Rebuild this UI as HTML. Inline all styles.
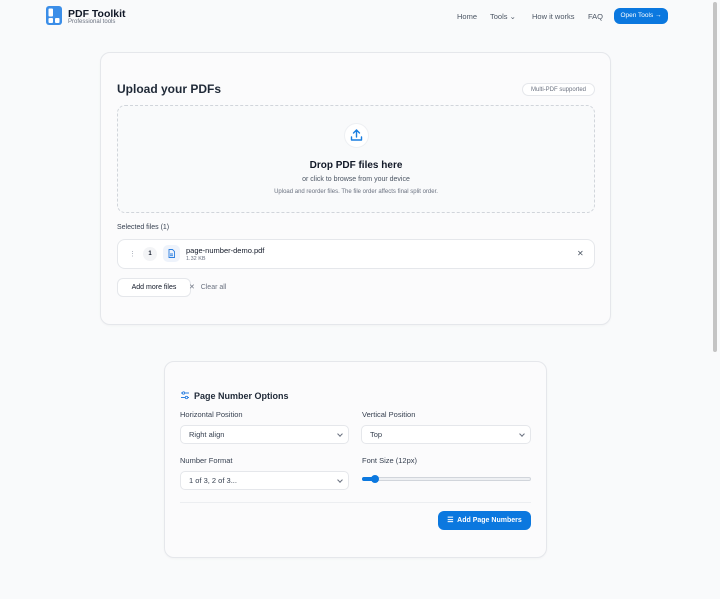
<!DOCTYPE html>
<html><head><meta charset="utf-8"><style>
*{box-sizing:border-box;margin:0;padding:0}
body{width:720px;height:599px;overflow:hidden;background:#f9fafb;font-family:"Liberation Sans",sans-serif;color:#111827;position:relative}
.abs{position:absolute}
.card{position:absolute;background:#fbfbfc;border:1px solid #e5e7eb;border-radius:10px;box-shadow:0 1px 2px rgba(0,0,0,.03)}
.sel{position:absolute;height:19px;border:1px solid #e5e7eb;border-radius:5px;background:#fff;font-size:7.5px;color:#374151;padding-left:8px;line-height:17px}
.sel:after{content:"";position:absolute;right:6px;top:6px;width:3px;height:3px;border-right:1px solid #6b7280;border-bottom:1px solid #6b7280;transform:rotate(45deg)}
.lbl{position:absolute;font-size:7.5px;color:#374151}
</style></head><body>
<svg class="abs" style="left:46px;top:6px" width="16" height="19" viewBox="0 0 16 19"><rect width="16" height="19" rx="3" fill="#3b8ee8"/><rect x="2.5" y="2.5" width="4.5" height="8" rx="1" fill="#fff"/><rect x="2.5" y="12" width="4.5" height="5" rx="1" fill="#fff"/><rect x="9" y="12" width="4.5" height="5" rx="1" fill="#fff"/></svg>
<div class="abs" style="left:68px;top:8px;font-size:10.5px;font-weight:bold">PDF Toolkit</div>
<div class="abs" style="left:68px;top:19px;font-size:6px;color:#6b7280">Professional tools</div>
<div class="abs" style="left:457px;top:12px;font-size:7.5px;color:#4b5563">Home</div>
<div class="abs" style="left:490px;top:12px;font-size:7.5px;color:#4b5563">Tools ⌄</div>
<div class="abs" style="left:532px;top:12px;font-size:7.5px;color:#4b5563">How it works</div>
<div class="abs" style="left:588px;top:12px;font-size:7.5px;color:#4b5563">FAQ</div>
<div class="abs" style="left:614px;top:8px;width:54px;height:16px;background:#0b78df;border-radius:6px;color:#fff;font-size:6.5px;line-height:16px;text-align:center">Open Tools →</div>
<div class="abs" style="left:713px;top:2px;width:4px;height:350px;background:#c4c4c4;border-radius:2px"></div>

<div class="card" style="left:100px;top:52px;width:511px;height:273px"></div>
<div class="abs" style="left:117px;top:82px;font-size:12px;font-weight:bold;color:#1f2937">Upload your PDFs</div>
<div class="abs" style="left:522px;top:83px;width:73px;height:13px;border:1px solid #e5e7eb;border-radius:7px;background:#fff;font-size:6px;color:#6b7280;text-align:center;line-height:12px">Multi-PDF supported</div>
<div class="abs" style="left:117px;top:105px;width:478px;height:108px;border:1px dashed #d1d5db;border-radius:8px;background:#f9fafb"></div>
<div class="abs" style="left:344px;top:123px;width:25px;height:25px;border-radius:50%;background:#fff;border:1px solid #eef0f3"></div>
<svg class="abs" style="left:349px;top:128px" width="15" height="15" viewBox="0 0 15 15" fill="none" stroke="#1a7ee0" stroke-width="1.4" stroke-linecap="round" stroke-linejoin="round"><path d="M7.5 2v7M4.5 5l3-3 3 3M2.5 9v3h10V9"/></svg>
<div class="abs" style="left:117px;top:160px;width:478px;text-align:center;font-size:10px;font-weight:bold">Drop PDF files here</div>
<div class="abs" style="left:117px;top:176px;width:478px;text-align:center;font-size:7px;color:#4b5563">or click to browse from your device</div>
<div class="abs" style="left:117px;top:189px;width:478px;text-align:center;font-size:6px;color:#6b7280">Upload and reorder files. The file order affects final split order.</div>
<div class="abs" style="left:117px;top:224px;font-size:7px;color:#374151">Selected files (1)</div>
<div class="abs" style="left:117px;top:239px;width:478px;height:30px;border:1px solid #e5e7eb;border-radius:8px;background:#fff"></div>
<div class="abs" style="left:129px;top:250px;font-size:7px;color:#9ca3af">⋮</div>
<div class="abs" style="left:143px;top:247px;width:14px;height:14px;border-radius:50%;background:#f3f4f6;font-size:6px;font-weight:bold;text-align:center;line-height:14px">1</div>
<div class="abs" style="left:163px;top:245px;width:17px;height:17px;border-radius:5px;background:#eef3fb"></div>
<svg class="abs" style="left:168px;top:249px" width="7" height="9" viewBox="0 0 7 9" fill="none" stroke="#2b7fe0" stroke-width="0.9"><path d="M1 .5h3.5L6.5 2.5V8.5H1z M2 5h3M2 6.7h3"/></svg>
<div class="abs" style="left:186px;top:246px;font-size:7.5px;color:#111827">page-number-demo.pdf</div>
<div class="abs" style="left:186px;top:256px;font-size:5.5px;color:#6b7280">1.32 KB</div>
<div class="abs" style="left:577px;top:249px;font-size:8px;color:#4b5563">✕</div>
<div class="abs" style="left:117px;top:278px;width:74px;height:19px;border:1px solid #e5e7eb;border-radius:6px;background:#fff;font-size:7px;text-align:center;line-height:17px">Add more files</div>
<div class="abs" style="left:189px;top:283px;font-size:7px;color:#6b7280">✕&nbsp;&nbsp;&nbsp;Clear all</div>

<div class="card" style="left:164px;top:361px;width:383px;height:197px"></div>
<svg class="abs" style="left:181px;top:391px" width="8" height="9" viewBox="0 0 8 9" fill="none" stroke="#2b7fe0" stroke-width="0.9"><path d="M0 2h8M0 6.5h8"/><circle cx="2.5" cy="2" r="1.2" fill="#fff"/><circle cx="5.5" cy="6.5" r="1.2" fill="#fff"/></svg>
<div class="abs" style="left:194px;top:391px;font-size:9px;font-weight:bold;color:#1f2937">Page Number Options</div>
<div class="lbl" style="left:180px;top:410px">Horizontal Position</div>
<div class="lbl" style="left:362px;top:410px">Vertical Position</div>
<div class="sel" style="left:180px;top:425px;width:169px">Right align</div>
<div class="sel" style="left:361px;top:425px;width:170px">Top</div>
<div class="lbl" style="left:180px;top:456px">Number Format</div>
<div class="lbl" style="left:362px;top:456px">Font Size (12px)</div>
<div class="sel" style="left:180px;top:471px;width:169px">1 of 3, 2 of 3...</div>
<div class="abs" style="left:362px;top:477px;width:169px;height:4px;border:1px solid #d1d5db;border-radius:2px;background:#eef0f3"></div>
<div class="abs" style="left:362px;top:477px;width:12px;height:4px;background:#0b78df;border-radius:2px"></div>
<div class="abs" style="left:371px;top:475px;width:8px;height:8px;background:#0b78df;border-radius:50%"></div>
<div class="abs" style="left:180px;top:502px;width:351px;height:1px;background:#eceef1"></div>
<div class="abs" style="left:438px;top:511px;width:93px;height:19px;background:#0b78df;border-radius:6px;color:#fff;font-size:7px;font-weight:bold;text-align:center;line-height:19px">☰&nbsp; Add Page Numbers</div>
</body></html>
